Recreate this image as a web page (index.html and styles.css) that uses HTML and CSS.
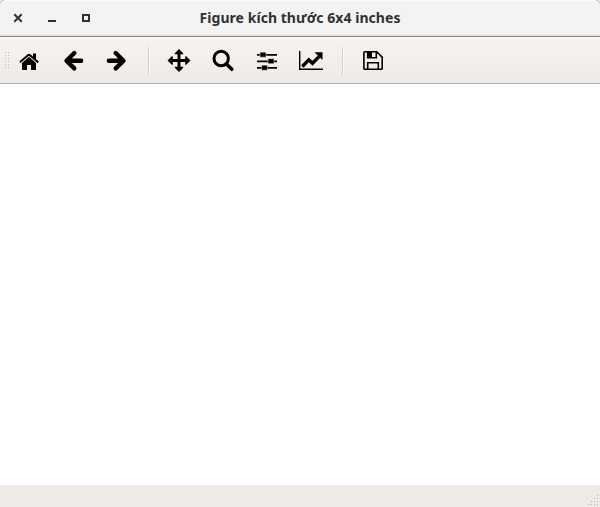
FILE: index.html
```html
<!DOCTYPE html>
<html lang="vi">
<head>
<meta charset="utf-8">
<title>Figure kích thước 6x4 inches</title>
<link rel="stylesheet" href="styles.css">
</head>
<body>
<div class="window">
  <header class="titlebar">
    <div class="controls">
      <svg viewBox="0 0 12 12"><path d="M2.300 2.300l7.400 7.400M9.700 2.300L2.300 9.700"/></svg>
      <svg viewBox="0 0 12 12"><path d="M2 9h8"/></svg>
      <svg viewBox="0 0 12 12"><path d="M3 3h6v6H3z"/></svg>
    </div>
    <h1>Figure kích thước 6x4 inches</h1>
  </header>
  <nav class="toolbar">
    <span class="handle"></span>
    <svg class="tool" viewBox="7 37 44 46"><path d="M33 53.500h3v6h-3z"/><path d="M22 63l7-6.200 7 6.200v6.200q0 .8-.8.8H31v-5h-4v5h-4.200q-.8 0-.8-.8z"/><path class="roof-gap" d="M20 63.200L29 55.700l9 7.500"/><path class="roof" d="M19.800 62.300L28.200 55.100q.8-.6 1.600 0l8.400 7.200"/></svg>
    <svg class="tool" viewBox="51 37 44 46"><path class="arrow" d="M81.200 60.700H67M74.300 53l-7.800 7.700 7.800 7.700"/></svg>
    <svg class="tool" viewBox="95 37 44 46"><path class="arrow" d="M108.800 60.700H123M115.700 53l7.800 7.700-7.800 7.700"/></svg>
    <span class="separator"></span>
    <svg class="tool" viewBox="157 37 44 46"><path d="M179 49l4.200 4.300v1h-2.700v4.700h4.700v-2.700h1l4.300 4.200-4.300 4.200h-1V62h-4.700v4.700h2.700v1L179 72l-4.200-4.300v-1h2.700V62h-4.700v2.700h-1l-4.300-4.200 4.300-4.200h1V59h4.700v-4.700h-2.700v-1z"/></svg>
    <svg class="tool" viewBox="201 37 44 46"><circle class="lens" cx="221.200" cy="58.500" r="7.200"/><path class="grip" d="M226.500 64l5.300 5.300"/></svg>
    <svg class="tool" viewBox="245 37 44 46"><path d="M257 54h20v1.700h-20zM257 60.500h20v1.700h-20zM257 67h20v1.700h-20z"/><path class="knobs" d="M260 52.200h6v5h-6zM268 58.700h6v5h-6zM261.500 65.200h6v5h-6z"/></svg>
    <svg class="tool" viewBox="289 37 44 46"><path d="M299 51h1.400v17.500H323V70h-24z"/><path class="trend" d="M302.300 66.500l6.500-6.700 3.700 3.500 7-7.200"/><path d="M314.500 52.200h8v7.800z"/></svg>
    <span class="separator"></span>
    <svg class="tool" viewBox="351 37 44 46"><path class="disk" d="M364.700 51.800h12.100l5.400 5.400v11.300q0 .8-.8.8h-16.700q-.8 0-.8-.8V52.600q0-.8.8-.8zM367.700 52v5.700h8.600V52M367.700 69v-6.200h10.600V69"/><path d="M367.500 52h4.500v5.500h-4.500z"/></svg>
  </nav>
  <main class="canvas"></main>
  <footer class="statusbar">
    <svg class="resize" viewBox="0 0 11 11"><path d="M9 0h1v1H9zM6 3h1v1H6zM9 3h1v1H9zM3 6h1v1H3zM6 6h1v1H6zM9 6h1v1H9zM0 9h1v1H0zM3 9h1v1H3zM6 9h1v1H6zM9 9h1v1H9z"/></svg>
  </footer>
</div>
</body>
</html>
```
FILE: styles.css
```css
* { box-sizing: border-box; }
body { margin: 0; background: #fff; }
.window {
  display: flex;
  flex-direction: column;
  width: 600px;
  height: 507px;
  overflow: hidden;
}
.titlebar {
  display: grid;
  grid-template-columns: 100px 1fr 100px;
  align-items: center;
  flex: 0 0 37px;
  border-top: 1px solid #f9f9f9;
  border-bottom: 1px solid #888b84;
  border-radius: 6px 6px 0 0;
  background: linear-gradient(#f3f3f3 33px, #dcdedb 35px);
  box-shadow: 0 0 0 1px #b5b5b5;
}
.controls { display: flex; gap: 22px; padding: 0 0 1px 12px; }
.controls svg {
  width: 12px;
  height: 12px;
  fill: none;
  stroke: #2e3436;
  stroke-width: 2;
}
h1 {
  margin: 0;
  padding-bottom: 2px;
  color: #2e3436;
  font: bold 14px/20px "Noto Sans", "Open Sans", sans-serif;
  letter-spacing: .05px;
  text-align: center;
  white-space: nowrap;
}
.toolbar {
  display: flex;
  flex: 0 0 47px;
  border-bottom: 1px solid #b4afab;
  background: linear-gradient(#f7f4ef, #eeeae5);
}
.handle {
  width: 5px;
  height: 17px;
  margin: 15px -3px 0 5px;
  background: radial-gradient(circle at .5px .5px, #bdb8b3 .65px, transparent .7px) 0 0 / 3px 3px;
}
.tool { width: 44px; height: 46px; fill: #000; }
.roof { fill: none; stroke: #000; stroke-width: 1.9; }
.roof-gap { fill: none; stroke: #c9c6c2; stroke-width: 1.7; }
.arrow { fill: none; stroke: #000; stroke-width: 4.4; stroke-linecap: round; stroke-linejoin: round; }
.lens { fill: none; stroke: #000; stroke-width: 3; }
.grip { fill: none; stroke: #000; stroke-width: 3.5; stroke-linecap: round; }
.knobs { stroke: #f3f0eb; stroke-width: .5; }
.trend { fill: none; stroke: #000; stroke-width: 3.4; }
.disk { fill: none; stroke: #000; stroke-width: 1.6; }
.separator {
  width: 2px;
  height: 28px;
  margin: 10px 7px 0 9px;
  border-left: 1px solid #d2cec9;
  border-right: 1px solid #fbfaf8;
}
.canvas { flex: 1; background: #fff; }
.statusbar {
  display: flex;
  flex: 0 0 22px;
  justify-content: flex-end;
  align-items: flex-end;
  padding: 0 1px 1px 0;
  background: #eeeae5;
}
.resize { width: 11px; height: 11px; fill: #b8b3ae; }
```
